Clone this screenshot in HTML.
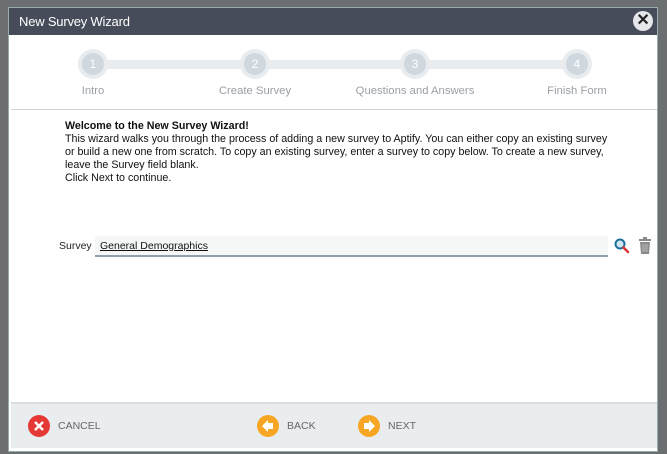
<!DOCTYPE html>
<html><head><style>
*{margin:0;padding:0;box-sizing:border-box}
body{width:667px;height:454px;background:#6c6f72;position:relative;overflow:hidden;font-family:"Liberation Sans",sans-serif}
.dlg{position:absolute;left:8px;top:7px;width:650px;height:445px;background:#fff;border:1px solid #9aa}
.hdr{position:absolute;left:0;top:0;width:100%;height:27px;background:#474c5a;color:#fff;font-size:13px;line-height:27px;padding-left:10px;letter-spacing:-0.2px}
.x{position:absolute;right:4px;top:3px;width:20px;height:20px;border-radius:50%;background:#e5e7ea;color:#222;font-size:16px;line-height:20px;text-align:center;font-weight:bold}
.bar{position:absolute;left:84px;top:52px;width:484px;height:9px;background:#e8ecef}
.c{position:absolute;width:30px;height:30px;border-radius:50%;background:#e8ecef;top:41px}
.c span{position:absolute;left:4px;top:4px;width:22px;height:22px;border-radius:50%;background:#cfd8de;color:#fff;font-size:12px;line-height:22px;text-align:center}
.lb{position:absolute;top:77px;font-size:11.3px;color:#9a9fa5;transform:translateX(-50%);white-space:nowrap}
.sep{position:absolute;left:2px;top:101px;width:646px;height:1px;background:#d0d4d8}
.txt{position:absolute;left:56px;top:112px;font-size:10.7px;line-height:13px;color:#111;white-space:nowrap}
.sl{position:absolute;left:50px;top:232px;font-size:10.5px;color:#222}
.in{position:absolute;left:86px;top:228px;width:513px;height:21px;background:#f6f7f7;border-bottom:2px solid #8fa1ad;font-size:10.5px;padding:4px 0 0 5px;text-decoration:underline;color:#111}
.ft{position:absolute;left:2px;top:394px;width:646px;height:46px;background:#eaedf0;border-top:2px solid #d8dde2}
.b{position:absolute;top:11px;font-size:10.5px;color:#666;line-height:22px;padding-left:30px}
.ic{position:absolute;left:0;top:0;width:22px;height:22px;border-radius:50%}
</style></head><body>
<div class="dlg">
<div class="hdr">New Survey Wizard<div class="x">✕</div></div>
<div class="bar"></div>
<div class="c" style="left:69px"><span>1</span></div>
<div class="c" style="left:231px"><span>2</span></div>
<div class="c" style="left:391px"><span>3</span></div>
<div class="c" style="left:553px"><span>4</span></div>
<div class="lb" style="left:84px">Intro</div>
<div class="lb" style="left:246px">Create Survey</div>
<div class="lb" style="left:406px">Questions and Answers</div>
<div class="lb" style="left:568px">Finish Form</div>
<div class="sep"></div>
<div class="txt"><b>Welcome to the New Survey Wizard!</b><br>This wizard walks you through the process of adding a new survey to Aptify. You can either copy an existing survey<br>or build a new one from scratch. To copy an existing survey, enter a survey to copy below. To create a new survey,<br>leave the Survey field blank.<br>Click Next to continue.</div>
<div class="sl">Survey</div>
<div class="in">General Demographics</div>
<svg style="position:absolute;left:605px;top:230px" width="16" height="16" viewBox="0 0 16 16"><circle cx="6" cy="6" r="4.5" fill="#cfe6f0" stroke="#1d6f95" stroke-width="2"/><path d="M9.5 9.5L14 14" stroke="#d33" stroke-width="2.5" stroke-linecap="round"/></svg>
<svg style="position:absolute;left:629px;top:229px" width="14" height="17" viewBox="0 0 14 17"><rect x="1" y="2" width="12" height="2" fill="#8a8a8a"/><rect x="5" y="0" width="4" height="2" fill="#8a8a8a"/><path d="M2 5h10l-1 12H3z" fill="#8a8a8a"/><path d="M5 7v8M7 7v8M9 7v8" stroke="#bbb" stroke-width="1"/></svg>
<div class="ft">
<div class="b" style="left:17px"><div class="ic" style="background:#e53935"><svg width="22" height="22"><path d="M7 7l8 8M15 7l-8 8" stroke="#fff" stroke-width="2.5"/></svg></div>CANCEL</div>
<div class="b" style="left:246px"><div class="ic" style="background:#f6a623"><svg width="22" height="22"><path d="M5 11l6-6v3h5v6h-5v3z" fill="#fff"/></svg></div>BACK</div>
<div class="b" style="left:347px"><div class="ic" style="background:#f6a623"><svg width="22" height="22"><path d="M17 11l-6-6v3H6v6h5v3z" fill="#fff"/></svg></div>NEXT</div>
</div>
</div>
</body></html>
